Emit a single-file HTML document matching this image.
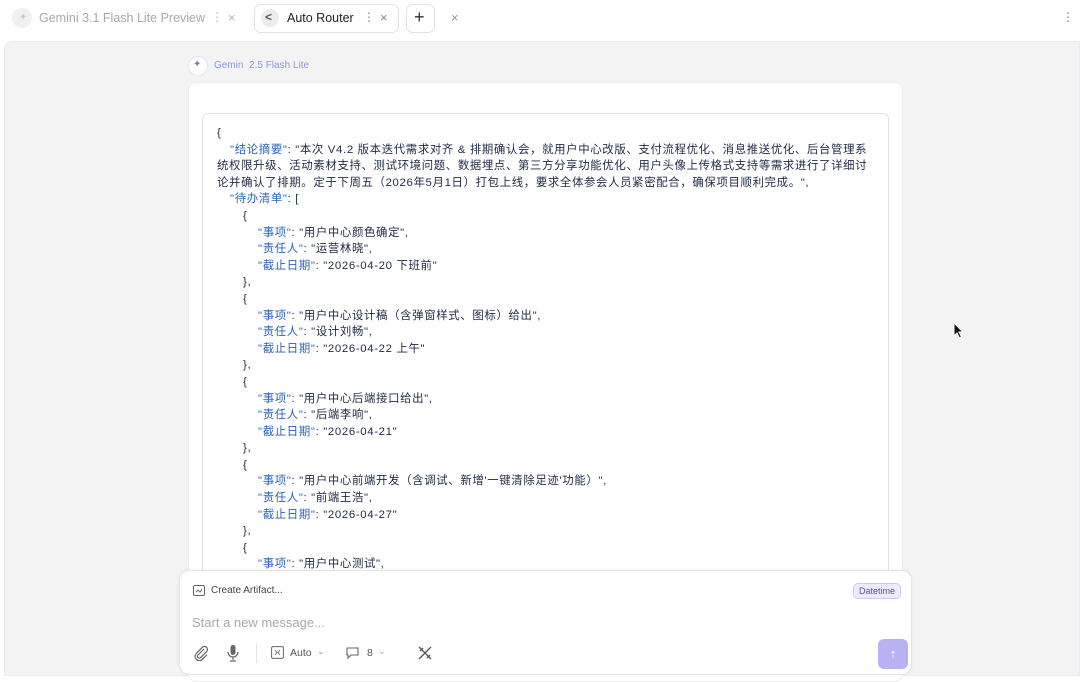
<!DOCTYPE html>
<html><head><meta charset="utf-8"><style>
*{box-sizing:border-box;margin:0;padding:0}
body{width:1080px;height:676px;overflow:hidden;background:#fff;font-family:"Liberation Sans","Noto Sans CJK SC",sans-serif;position:relative}
.t{position:absolute;font-size:12px}
.panel{position:absolute;left:4px;top:41px;width:1076px;height:635px;background:#f3f3f4;border:1px solid #ececee;border-radius:8px 0 0 0}
.card{position:absolute;left:188px;top:82px;width:715px;height:600px;background:#fff;border-radius:8px;border:1px solid #ececec}
.code{position:absolute;left:202px;top:113px;width:687px;height:470px;border:1px solid #e2e2e2;border-radius:6px;background:#fff;overflow:hidden}
.pre{position:absolute;left:14px;top:11px;width:660px;font-size:11.4px;line-height:16.6px;color:#1f2a44;word-break:break-all;letter-spacing:0.65px}
.pre div{white-space:pre-wrap}
.l1{padding-left:13px}.l2{padding-left:26px}.l3{padding-left:41px}
.k{color:#2b63b8}
.input{position:absolute;left:179px;top:570px;width:733px;height:105px;background:#fff;border:1px solid #e4e4e8;border-radius:10px;box-shadow:0 -1px 4px rgba(0,0,0,.04)}
</style></head><body>
<div style="position:absolute;left:12px;top:8px;width:20px;height:20px;border-radius:50%;background:#f0f0f2"></div>
<div class="t" style="left:19px;top:12px;color:#c8c8d0;font-size:10px">✦</div>
<div class="t" style="left:39px;top:11px;color:#a8a8ae;font-size:12.5px">Gemini 3.1 Flash Lite Preview</div>
<div class="t" style="left:211px;top:10px;color:#c0c0c4">⋮</div>
<div class="t" style="left:228px;top:10px;color:#b8b8bc;font-size:13px">×</div>
<div style="position:absolute;left:254px;top:4px;width:145px;height:29px;border:1px solid #e2e2e4;border-radius:7px;background:#fff"></div>
<div style="position:absolute;left:261px;top:9px;width:18px;height:18px;border-radius:50%;background:#ececef"></div>
<div class="t" style="left:265px;top:10px;color:#555;font-size:12px;font-weight:bold">&lt;</div>
<div class="t" style="left:287px;top:11px;color:#222;font-size:12.5px">Auto Router</div>
<div class="t" style="left:363px;top:10px;color:#888">⋮</div>
<div class="t" style="left:380px;top:10px;color:#888;font-size:13px">×</div>
<div style="position:absolute;left:406px;top:4px;width:29px;height:29px;border:1px solid #e2e2e4;border-radius:7px;background:#fff"></div>
<div class="t" style="left:414px;top:7px;color:#333;font-size:18px">+</div>
<div class="t" style="left:451px;top:10px;color:#999;font-size:13px">×</div>
<div class="t" style="left:1062px;top:10px;color:#777">⋮</div>

<div class="panel"></div>
<div style="position:absolute;left:188px;top:56px;width:20px;height:20px;border-radius:50%;background:#fff;border:1px solid #e6e6ea"></div>
<div class="t" style="left:193px;top:59px;color:#6a7fd8;font-size:10px">✦</div>
<div class="t" style="left:214px;top:60px;color:#8a98d8;font-size:10px">Gemin&nbsp; 2.5 Flash Lite</div>
<div class="card"></div>
<div class="code"><div class="pre">
<div>{</div>
<div style="text-indent:13px"><span class="k">"结论摘要"</span>: "本次 V4.2 版本迭代需求对齐 &amp; 排期确认会，就用户中心改版、支付流程优化、消息推送优化、后台管理系统权限升级、活动素材支持、测试环境问题、数据埋点、第三方分享功能优化、用户头像上传格式支持等需求进行了详细讨论并确认了排期。定于下周五（2026年5月1日）打包上线，要求全体参会人员紧密配合，确保项目顺利完成。",</div>
<div class="l1"><span class="k">"待办清单"</span>: [</div>
<div class="l2">{</div>
<div class="l3"><span class="k">"事项"</span>: "用户中心颜色确定",</div>
<div class="l3"><span class="k">"责任人"</span>: "运营林晓",</div>
<div class="l3"><span class="k">"截止日期"</span>: "2026-04-20 下班前"</div>
<div class="l2">},</div>
<div class="l2">{</div>
<div class="l3"><span class="k">"事项"</span>: "用户中心设计稿（含弹窗样式、图标）给出",</div>
<div class="l3"><span class="k">"责任人"</span>: "设计刘畅",</div>
<div class="l3"><span class="k">"截止日期"</span>: "2026-04-22 上午"</div>
<div class="l2">},</div>
<div class="l2">{</div>
<div class="l3"><span class="k">"事项"</span>: "用户中心后端接口给出",</div>
<div class="l3"><span class="k">"责任人"</span>: "后端李响",</div>
<div class="l3"><span class="k">"截止日期"</span>: "2026-04-21"</div>
<div class="l2">},</div>
<div class="l2">{</div>
<div class="l3"><span class="k">"事项"</span>: "用户中心前端开发（含调试、新增'一键清除足迹'功能）",</div>
<div class="l3"><span class="k">"责任人"</span>: "前端王浩",</div>
<div class="l3"><span class="k">"截止日期"</span>: "2026-04-27"</div>
<div class="l2">},</div>
<div class="l2">{</div>
<div class="l3"><span class="k">"事项"</span>: "用户中心测试",</div>
</div></div>

<div class="input">
  <svg style="position:absolute;left:13px;top:14px" width="12" height="11" viewBox="0 0 12 11"><rect x="0.5" y="0.5" width="11" height="10" rx="1.5" fill="none" stroke="#666"/><path d="M3 7l2-2 2 2 2-3" fill="none" stroke="#666" stroke-width="0.9"/></svg>
  <div class="t" style="left:31px;top:14px;font-size:10px;color:#444">Create Artifact...</div>
  <div style="position:absolute;left:673px;top:12px;width:48px;height:16px;border:1px solid #cfc7f0;background:#eeeaff;border-radius:5px;font-size:9px;color:#5a55a0;text-align:center;line-height:14px">Datetime</div>
  <div class="t" style="left:12px;top:44px;font-size:13px;color:#a8a8ae">Start a new message...</div>
  <svg style="position:absolute;left:13px;top:74px" width="16" height="16" viewBox="0 0 16 16"><path d="M11 4L5 10a1.8 1.8 0 002.6 2.6l6-6a3 3 0 00-4.3-4.3L3.3 8.4a4.2 4.2 0 006 6L14 9.7" fill="none" stroke="#666" stroke-width="1.2"/></svg>
  <svg style="position:absolute;left:46px;top:73px" width="14" height="18" viewBox="0 0 14 18"><rect x="4.5" y="1" width="5" height="10" rx="2.5" fill="#666"/><path d="M2 8a5 5 0 0010 0M7 13v3M4 17h6" fill="none" stroke="#666" stroke-width="1.2"/></svg>
  <div style="position:absolute;left:76px;top:72px;width:1px;height:20px;background:#e4e4e4"></div>
  <svg style="position:absolute;left:91px;top:75px" width="13" height="13" viewBox="0 0 13 13"><rect x="0.6" y="0.6" width="11.8" height="11.8" rx="1.5" fill="none" stroke="#666"/><path d="M4 4l2 2.5-2 2.5M9 4L7 6.5 9 9" fill="none" stroke="#666" stroke-width="0.9"/></svg>
  <div class="t" style="left:110px;top:76px;font-size:10.5px;color:#555">Auto</div>
  <div class="t" style="left:137px;top:75px;font-size:9px;color:#999">⌄</div>
  <svg style="position:absolute;left:165px;top:74px" width="16" height="16" viewBox="0 0 16 16"><path d="M2 3h11v7H6l-3 3v-3H2z" fill="none" stroke="#666" stroke-width="1.1"/></svg>
  <div class="t" style="left:187px;top:76px;font-size:10.5px;color:#555">8</div>
  <div class="t" style="left:198px;top:75px;font-size:9px;color:#999">⌄</div>
  <svg style="position:absolute;left:237px;top:74px" width="16" height="16" viewBox="0 0 16 16"><path d="M2 2l12 12M14 2L2 14M3 6l3-3M10 13l3-3" fill="none" stroke="#555" stroke-width="1.3"/></svg>
  <div style="position:absolute;left:698px;top:68px;width:30px;height:30px;border-radius:6px;background:#b8b2f5;color:#fff;text-align:center;line-height:30px;font-size:13px">↑</div>
</div>
<svg style="position:absolute;left:953px;top:322px" width="12" height="17" viewBox="0 0 12 17"><path d="M1 1v13l3-3 2.5 5 2-1-2.5-5H10z" fill="#111" stroke="#fff" stroke-width="1"/></svg>
</body></html>
